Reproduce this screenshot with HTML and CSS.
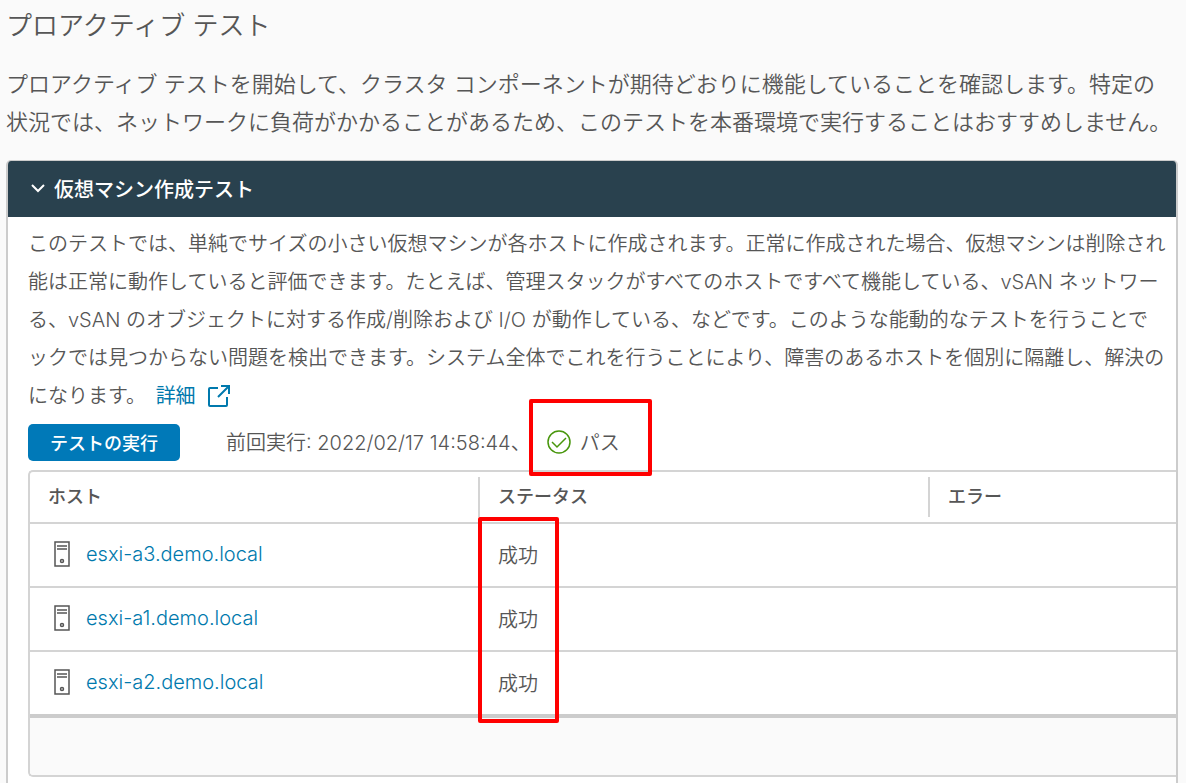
FILE: index.html
```
<!DOCTYPE html>
<html lang="ja">
<head>
  <meta charset="UTF-8">
  <meta name="viewport" content="width=device-width, initial-scale=1.0">
  <title>プロアクティブ テスト</title>
  <link rel="stylesheet" href="styles.css">
</head>
<body>
  <h1>プロアクティブ テスト</h1>
  <p class="intro">プロアクティブ テストを開始して、クラスタ コンポーネントが期待どおりに機能していることを確認します。特定の<br>状況では、ネットワークに負荷がかかることがあるため、このテストを本番環境で実行することはおすすめしません。</p>

  <section class="panel">
    <button type="button" class="panel-header" aria-expanded="true">
      <svg class="caret" viewBox="0 0 16 16" aria-hidden="true"><path d="M2 5l6 6 6-6"/></svg>
      仮想マシン作成テスト
    </button>

    <div class="panel-body">
      <p class="detail">このテストでは、単純でサイズの小さい仮想マシンが各ホストに作成されます。正常に作成された場合、仮想マシンは削除され<br>能は正常に動作していると評価できます。たとえば、管理スタックがすべてのホストですべて機能している、vSAN ネットワー<br>る、vSAN のオブジェクトに対する作成/削除および I/O が動作している、などです。このような能動的なテストを行うことで<br>ックでは見つからない問題を検出できます。システム全体でこれを行うことにより、障害のあるホストを個別に隔離し、解決の<br>になります。 <a href="#" class="more">詳細
        <svg class="external" viewBox="0 0 24 24" aria-hidden="true"><path d="M11 4H3q-1 0-1 1v16q0 1 1 1h16q1 0 1-1v-8M14 2h8v8M22 2L11 13"/></svg></a></p>

      <div class="actions">
        <button type="button" class="run">テストの実行</button>
        <span class="last-run">前回実行: 2022/02/17 14:58:44、</span>
        <span class="result">
          <svg class="check" viewBox="0 0 24 24" aria-hidden="true"><circle cx="12" cy="12" r="11"/><path d="M5 12l5 5 9-9"/></svg>
          パス
        </span>
      </div>

      <div class="grid">
        <table>
          <thead>
            <tr>
              <th scope="col"><span>ホスト</span></th>
              <th scope="col"><span>ステータス</span></th>
              <th scope="col"><span>エラー</span></th>
            </tr>
          </thead>
          <tbody>
            <tr>
              <td><a href="#" class="host"><svg viewBox="0 0 16 26" aria-hidden="true"><path d="M1 1h14v24H1zM3 5h10M3 8h10"/><circle cx="8" cy="20" r="1.5"/></svg>esxi-a3.demo.local</a></td>
              <td class="status first">成功</td>
              <td></td>
            </tr>
            <tr>
              <td><a href="#" class="host"><svg viewBox="0 0 16 26" aria-hidden="true"><path d="M1 1h14v24H1zM3 5h10M3 8h10"/><circle cx="8" cy="20" r="1.5"/></svg>esxi-a1.demo.local</a></td>
              <td class="status">成功</td>
              <td></td>
            </tr>
            <tr>
              <td><a href="#" class="host"><svg viewBox="0 0 16 26" aria-hidden="true"><path d="M1 1h14v24H1zM3 5h10M3 8h10"/><circle cx="8" cy="20" r="1.5"/></svg>esxi-a2.demo.local</a></td>
              <td class="status">成功</td>
              <td></td>
            </tr>
          </tbody>
        </table>
        <div class="grid-footer"></div>
      </div>
    </div>
  </section>
</body>
</html>
```

FILE: styles.css
```
*,
*::after {
  box-sizing: border-box;
}

body {
  display: flex;
  flex-direction: column;
  min-height: 100vh;
  margin: 0;
  padding: 6px 8px 0 6px;
  background: #fafafa;
  color: #565656;
  font-family: Inter, "Noto Sans CJK JP", sans-serif;
  font-size: 20px;
  font-weight: 350;
}

a {
  color: #0079ad;
  text-decoration: none;
}

button {
  font-family: inherit;
  cursor: pointer;
}

svg {
  fill: none;
  stroke: currentColor;
  stroke-width: 2;
}

h1 {
  margin: 0 0 19px;
  font-size: 26px;
  font-weight: 350;
  line-height: 40px;
}

.intro {
  margin: 0 0 19px;
  font-size: 22px;
  line-height: 38px;
  white-space: nowrap;
}

.panel {
  flex: 1;
  border: 2px solid #ccc;
  border-width: 1px 2px 0;
  border-radius: 5px 5px 0 0;
  background: #fff;
  overflow: hidden;
}

.panel-header {
  display: flex;
  align-items: center;
  gap: 8px;
  width: 100%;
  height: 56px;
  padding: 0 22px 2px;
  border: 0;
  background: #29414e;
  color: #fff;
  font-size: 20px;
  font-weight: 500;
}

.caret {
  width: 16px;
  height: 16px;
}

.panel-body {
  padding: 8px 0 0 20px;
}

.detail {
  margin: 0;
  line-height: 38px;
  white-space: nowrap;
}

.more {
  margin-left: 4px;
  font-weight: 400;
}

.external {
  width: 24px;
  height: 24px;
  margin-left: 6px;
  vertical-align: -5px;
}

.actions {
  display: flex;
  align-items: center;
  height: 37px;
  margin: 9px 0;
}

.run {
  height: 37px;
  padding: 0 22px 2px;
  border: 0;
  border-radius: 5px;
  background: #0079b8;
  color: #fff;
  font-size: 18px;
  font-weight: 500;
}

.last-run,
.result {
  padding-bottom: 2px;
}

.last-run {
  margin-left: 46px;
}

.result {
  position: relative;
  display: flex;
  align-items: center;
  gap: 9px;
  margin-left: 16px;
}

.check {
  width: 24px;
  height: 24px;
  color: #48960c;
}

.check,
.host svg {
  stroke-width: 1.5;
}

/* red marker frames */
.result::after,
.first::after {
  content: "";
  position: absolute;
  z-index: 1;
  border: 4px solid #f00;
  border-radius: 2px;
}

.result::after {
  top: -28px;
  left: -18px;
  width: 123px;
  height: 77px;
}

.first::after {
  top: -7px;
  left: -2px;
  width: 81px;
  height: 206px;
}

.grid {
  border: 2px solid #d4d4d4;
  border-right: 0;
  border-radius: 5px 0 0 5px;
}

table {
  width: 100%;
  border-spacing: 0;
  table-layout: fixed;
}

th,
td {
  height: 64px;
  padding: 0 0 2px 18px;
  border-bottom: 2px solid #d4d4d4;
  text-align: left;
}

th {
  height: 52px;
  padding: 0;
  font-size: 18px;
  font-weight: 500;
}

th:nth-child(-n+2) {
  width: 450px;
}

th span {
  display: block;
  padding-left: 18px;
  line-height: 40px;
}

th + th span {
  margin-left: -2px;
  border-left: 2px solid #d4d4d4;
}

tr:last-child td {
  height: 66px;
  border-bottom: 4px solid #ccc;
}

.status {
  position: relative;
}

.host {
  display: flex;
  align-items: center;
  gap: 16px;
  padding-left: 6px;
}

.host svg {
  width: 16px;
  height: 26px;
  color: #565656;
}

.grid-footer {
  height: 57px;
  border-radius: 0 0 0 4px;
  background: #fafafa;
}
```
